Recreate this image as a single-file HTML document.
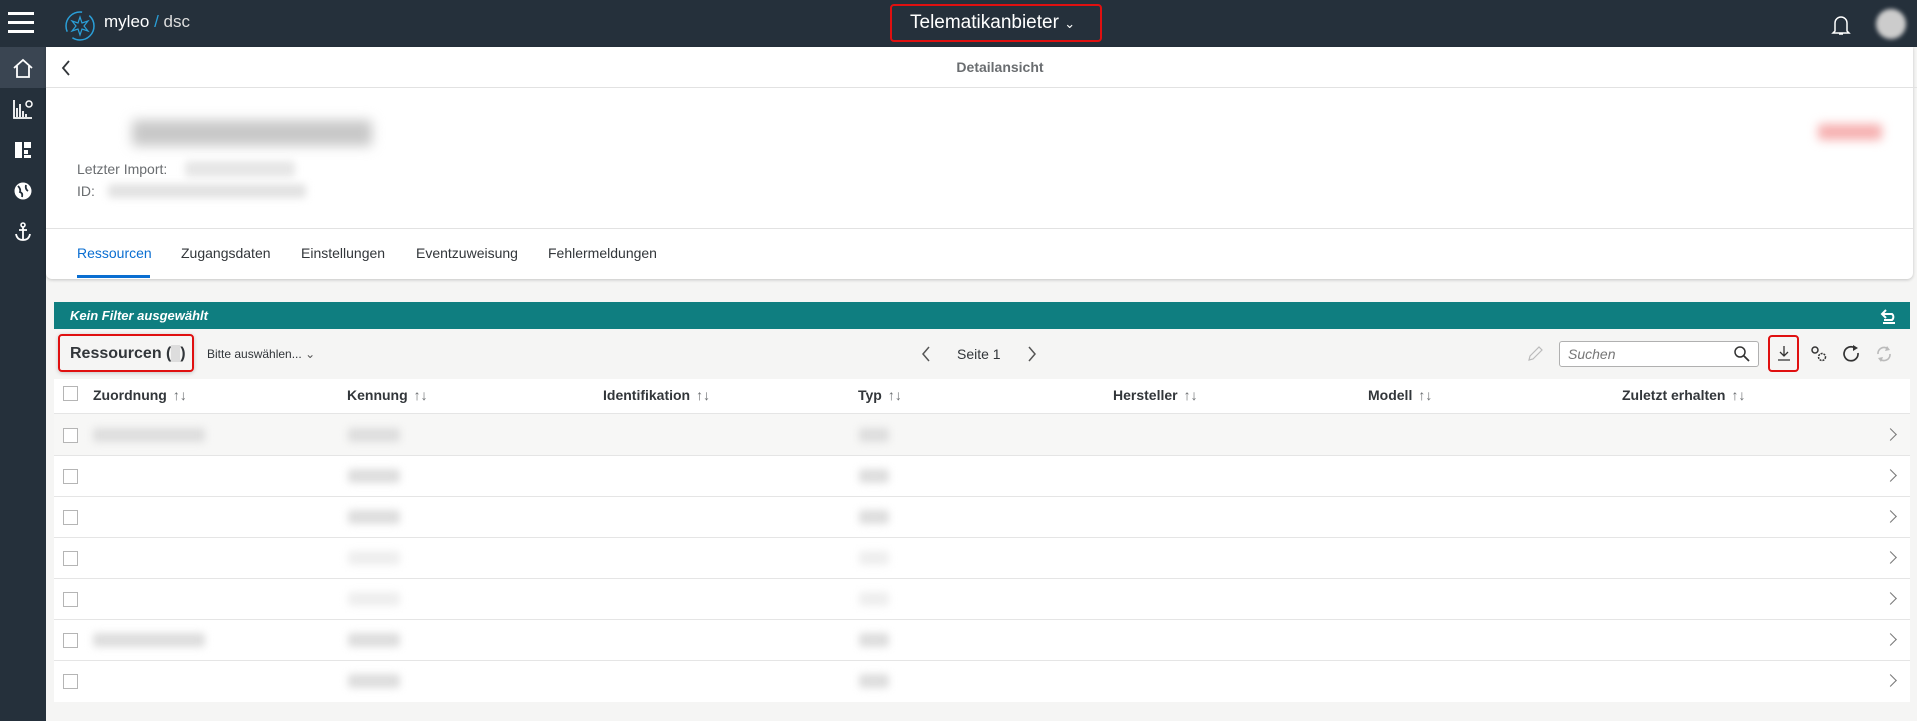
<!DOCTYPE html>
<html><head><meta charset="utf-8"><style>
*{box-sizing:border-box;margin:0;padding:0}
body{width:1917px;height:721px;overflow:hidden;background:#f5f5f4;font-family:"Liberation Sans",sans-serif;color:#32363a;position:relative}
.abs{position:absolute}
.top{left:0;top:0;width:1917px;height:47px;background:#25303b}
.side{left:0;top:47px;width:46px;height:674px;background:#25303b}
.blur{position:absolute;background:#ccc;filter:blur(4px);border-radius:3px}
.th{position:absolute;top:387px;font-weight:bold;font-size:14px;color:#32363a}
.th span{font-weight:normal;color:#6a6d70;margin-left:6px}
.row{position:absolute;left:54px;width:1856px;height:41px;background:#fff;border-bottom:1px solid #e5e5e5}
.cb{position:absolute;left:63px;width:15px;height:15px;border:1.5px solid #b5b5b5;background:#fff}
.chev{position:absolute;left:1886px;width:9px;height:9px;border-right:1.5px solid #777;border-top:1.5px solid #777;transform:rotate(45deg)}
.tab{position:absolute;top:245px;font-size:14px;color:#32363a}
</style></head><body>
<div class="abs top"></div>
<div class="abs" style="left:8px;top:12px;width:26px;height:3px;background:#fff;box-shadow:0 9px 0 #fff,0 18px 0 #fff"></div>
<svg class="abs" style="left:63px;top:9px" width="34" height="34" viewBox="0 0 34 34"><circle cx="17" cy="17" r="14" fill="none" stroke="#2a9fd8" stroke-width="1.5" stroke-dasharray="30 8"/><path d="M17 8L19 14L25 12L21 17L25 22L19 20L17 26L15 20L9 22L13 17L9 12L15 14Z" fill="none" stroke="#2a9fd8" stroke-width="1.2"/></svg>
<div class="abs" style="left:104px;top:12px;font-size:17px;color:#fff">myleo <span style="color:#2a9fd8">/</span><span style="color:#ddd"> dsc</span></div>
<div class="abs" style="left:890px;top:4px;width:212px;height:38px;border:2px solid #e01010;border-radius:4px"></div>
<div class="abs" style="left:910px;top:12px;font-size:19px;color:#fff">Telematikanbieter <span style="font-size:13px">&#8964;</span></div>
<svg class="abs" style="left:1830px;top:13px" width="22" height="24" viewBox="0 0 22 24"><path d="M5 18V10a6 6 0 0 1 12 0v8l2 2H3z M9 21h4" fill="none" stroke="#fff" stroke-width="1.5"/></svg>
<div class="abs" style="left:1876px;top:9px;width:30px;height:30px;border-radius:50%;background:#ccc;filter:blur(2px)"></div>
<div class="abs side"></div>
<div class="abs" style="left:0;top:47px;width:46px;height:41px;background:#3a4552"></div>
<svg class="abs" style="left:12px;top:57px" width="22" height="22" viewBox="0 0 22 22"><path d="M2 11L11 3L20 11M5 9V20H17V9" fill="none" stroke="#fff" stroke-width="1.8"/></svg>
<svg class="abs" style="left:12px;top:98px" width="22" height="22" viewBox="0 0 22 22"><path d="M2 2V20H20M5 19V10M8 19V6M11 19V13M14 19V16" stroke="#fff" stroke-width="1.8" fill="none"/><circle cx="17" cy="6" r="3" fill="none" stroke="#fff" stroke-width="1.5"/></svg>
<svg class="abs" style="left:12px;top:139px" width="22" height="22" viewBox="0 0 22 22"><path d="M3 3H10V19H3ZM12 3H19V9H12ZM12 11H16V15H12ZM12 16H19V19H12Z" fill="#fff"/></svg>
<svg class="abs" style="left:12px;top:180px" width="22" height="22" viewBox="0 0 22 22"><circle cx="11" cy="11" r="8.5" fill="#fff"/><path d="M6 6Q9 9 8 12Q11 13 10 17M14 5Q13 9 16 11" stroke="#25303b" stroke-width="1.8" fill="none"/></svg>
<svg class="abs" style="left:12px;top:221px" width="22" height="22" viewBox="0 0 22 22"><circle cx="11" cy="4" r="2" fill="none" stroke="#fff" stroke-width="1.6"/><path d="M11 6V19M7 9H15M4 13Q5 19 11 19Q17 19 18 13" fill="none" stroke="#fff" stroke-width="1.8"/></svg>
<!-- card -->
<div class="abs" style="left:46px;top:47px;width:1867px;height:232px;background:#fff;box-shadow:0 1px 3px rgba(0,0,0,.2);border-radius:0 0 6px 6px"></div>
<div class="abs" style="left:46px;top:87px;width:1871px;height:1px;background:#e2e2e2"></div>
<svg class="abs" style="left:60px;top:60px" width="12" height="16"><path d="M9 1L3 8L9 15" fill="none" stroke="#32363a" stroke-width="1.8"/></svg>
<div class="abs" style="left:0;width:2000px;top:59px;text-align:center;font-size:14px;font-weight:bold;color:#6a6d70">Detailansicht</div>
<div class="blur" style="left:132px;top:120px;width:240px;height:26px;background:#c8c8c8;filter:blur(6px)"></div>
<div class="blur" style="left:1818px;top:124px;width:64px;height:16px;background:#f6b0b0;filter:blur(5px)"></div>
<div class="abs" style="left:77px;top:161px;font-size:14px;color:#6a6d70">Letzter Import:</div>
<div class="blur" style="left:185px;top:161px;width:110px;height:16px;background:#e6e6e6"></div>
<div class="abs" style="left:77px;top:183px;font-size:14px;color:#6a6d70">ID:</div>
<div class="blur" style="left:108px;top:184px;width:198px;height:14px;background:#e2e2e2"></div>
<div class="abs" style="left:46px;top:228px;width:1867px;height:1px;background:#e2e2e2"></div>
<div class="tab" style="left:77px;color:#0a6ed1">Ressourcen</div>
<div class="abs" style="left:77px;top:275px;width:73px;height:3px;background:#0a6ed1"></div>
<div class="tab" style="left:181px">Zugangsdaten</div>
<div class="tab" style="left:301px">Einstellungen</div>
<div class="tab" style="left:416px">Eventzuweisung</div>
<div class="tab" style="left:548px">Fehlermeldungen</div>
<!-- teal bar -->
<div class="abs" style="left:54px;top:302px;width:1856px;height:27px;background:#0f7e80"></div>
<div class="abs" style="left:70px;top:308px;font-size:13px;font-style:italic;font-weight:bold;color:#fff">Kein Filter ausgewählt</div>
<svg class="abs" style="left:1880px;top:307px" width="18" height="18" viewBox="0 0 18 18"><path d="M6 3L2 7L6 11M2 7H12A4 4 0 0 1 12 13H4M3 16H15" fill="none" stroke="#fff" stroke-width="2"/></svg>
<!-- toolbar -->
<div class="abs" style="left:58px;top:334px;width:136px;height:38px;border:2px solid #e01010;border-radius:4px;box-shadow:0 1px 4px rgba(0,0,0,.2)"></div>
<div class="abs" style="left:70px;top:345px;font-size:16px;font-weight:bold">Ressourcen (<span style="background:#ddd;color:#ddd">0</span>)</div>
<div class="abs" style="left:207px;top:347px;font-size:12px">Bitte auswählen... <span style="color:#555">&#8964;</span></div>
<svg class="abs" style="left:920px;top:346px" width="12" height="16"><path d="M9 1L3 8L9 15" fill="none" stroke="#555" stroke-width="1.5"/></svg>
<div class="abs" style="left:957px;top:346px;font-size:14px">Seite 1</div>
<svg class="abs" style="left:1026px;top:346px" width="12" height="16"><path d="M3 1L9 8L3 15" fill="none" stroke="#555" stroke-width="1.5"/></svg>
<svg class="abs" style="left:1526px;top:345px" width="18" height="18" viewBox="0 0 18 18"><path d="M3 15L4 11L13 2L16 5L7 14Z" fill="none" stroke="#bbb" stroke-width="1.2"/></svg>
<div class="abs" style="left:1559px;top:341px;width:200px;height:26px;border:1px solid #b0b0b0;border-radius:3px;background:#fff"></div>
<div class="abs" style="left:1568px;top:346px;font-size:14px;font-style:italic;color:#777">Suchen</div>
<svg class="abs" style="left:1733px;top:345px" width="18" height="18" viewBox="0 0 18 18"><circle cx="7" cy="7" r="5" fill="none" stroke="#333" stroke-width="1.5"/><path d="M11 11L16 16" stroke="#333" stroke-width="1.8"/></svg>
<div class="abs" style="left:1768px;top:335px;width:31px;height:37px;border:2px solid #e01010;border-radius:4px"></div>
<svg class="abs" style="left:1775px;top:344px" width="18" height="18" viewBox="0 0 18 18"><path d="M9 2V12M5 8L9 12L13 8M3 16H15" fill="none" stroke="#333" stroke-width="1.3"/></svg>
<svg class="abs" style="left:1809px;top:344px" width="20" height="20" viewBox="0 0 20 20"><circle cx="6" cy="6" r="3" fill="none" stroke="#333" stroke-width="1.5"/><circle cx="13" cy="13" r="3.5" fill="none" stroke="#333" stroke-width="1.5" stroke-dasharray="2 1"/></svg>
<svg class="abs" style="left:1842px;top:344px" width="20" height="20" viewBox="0 0 20 20"><path d="M13 4A7 7 0 1 0 16 9" fill="none" stroke="#333" stroke-width="1.7"/><path d="M11 1L16 4L11 7Z" fill="#333"/></svg>
<svg class="abs" style="left:1874px;top:344px" width="20" height="20" viewBox="0 0 20 20"><path d="M4 10A6 6 0 0 1 14 5M16 10A6 6 0 0 1 6 15" fill="none" stroke="#bbb" stroke-width="1.7"/><path d="M13 2L16 6L11 7ZM7 18L4 14L9 13Z" fill="#bbb"/></svg>
<!-- table header -->
<div class="abs" style="left:54px;top:379px;width:1856px;height:35px;background:#fff;border-bottom:1px solid #e5e5e5"></div>
<div class="cb" style="top:386px"></div>
<div class="th" style="left:93px">Zuordnung<span>↑↓</span></div>
<div class="th" style="left:347px">Kennung<span>↑↓</span></div>
<div class="th" style="left:603px">Identifikation<span>↑↓</span></div>
<div class="th" style="left:858px">Typ<span>↑↓</span></div>
<div class="th" style="left:1113px">Hersteller<span>↑↓</span></div>
<div class="th" style="left:1368px">Modell<span>↑↓</span></div>
<div class="th" style="left:1622px">Zuletzt erhalten<span>↑↓</span></div>
<!-- rows -->
<div class="row" style="top:414px;height:42px;background:#f7f7f6"></div>
<div class="row" style="top:456px"></div>
<div class="row" style="top:497px"></div>
<div class="row" style="top:538px"></div>
<div class="row" style="top:579px"></div>
<div class="row" style="top:620px"></div>
<div class="row" style="top:661px;border-bottom:none"></div>
<div class="cb" style="top:428px"></div><div class="cb" style="top:469px"></div><div class="cb" style="top:510px"></div><div class="cb" style="top:551px"></div><div class="cb" style="top:592px"></div><div class="cb" style="top:633px"></div><div class="cb" style="top:674px"></div>
<div class="blur" style="left:93px;top:428px;width:112px;height:14px;background:#ddd"></div>
<div class="blur" style="left:93px;top:633px;width:112px;height:14px;background:#ddd"></div>
<div class="blur" style="left:348px;top:428px;width:52px;height:14px;background:#ddd"></div>
<div class="blur" style="left:348px;top:469px;width:52px;height:14px;background:#ddd"></div>
<div class="blur" style="left:348px;top:510px;width:52px;height:14px;background:#ddd"></div>
<div class="blur" style="left:348px;top:551px;width:52px;height:14px;background:#eee"></div>
<div class="blur" style="left:348px;top:592px;width:52px;height:14px;background:#eee"></div>
<div class="blur" style="left:348px;top:633px;width:52px;height:14px;background:#ddd"></div>
<div class="blur" style="left:348px;top:674px;width:52px;height:14px;background:#ddd"></div>
<div class="blur" style="left:859px;top:428px;width:30px;height:14px;background:#ddd"></div>
<div class="blur" style="left:859px;top:469px;width:30px;height:14px;background:#ddd"></div>
<div class="blur" style="left:859px;top:510px;width:30px;height:14px;background:#ddd"></div>
<div class="blur" style="left:859px;top:551px;width:30px;height:14px;background:#eee"></div>
<div class="blur" style="left:859px;top:592px;width:30px;height:14px;background:#eee"></div>
<div class="blur" style="left:859px;top:633px;width:30px;height:14px;background:#ddd"></div>
<div class="blur" style="left:859px;top:674px;width:30px;height:14px;background:#ddd"></div>
<div class="chev" style="top:430px"></div><div class="chev" style="top:471px"></div><div class="chev" style="top:512px"></div><div class="chev" style="top:553px"></div><div class="chev" style="top:594px"></div><div class="chev" style="top:635px"></div><div class="chev" style="top:676px"></div>
</body></html>
